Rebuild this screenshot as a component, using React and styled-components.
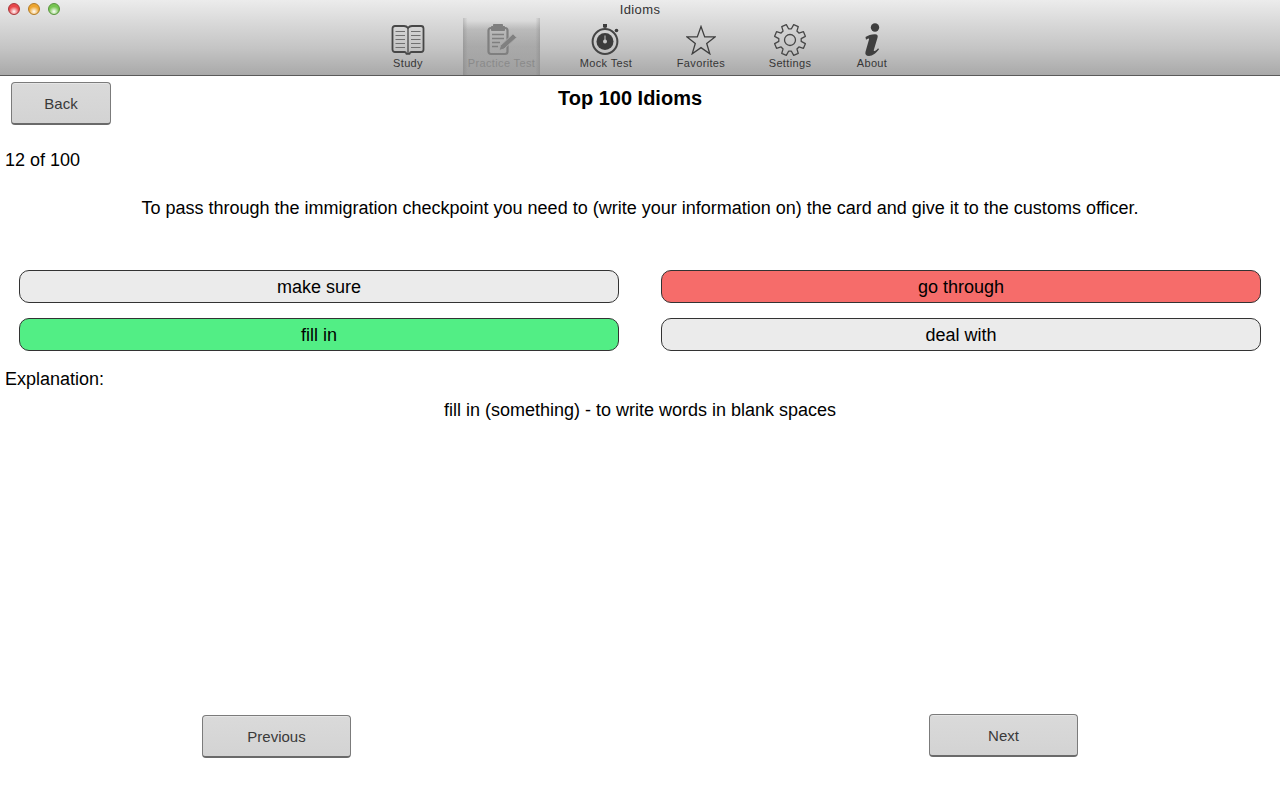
import styled, { createGlobalStyle } from "styled-components"

const GlobalStyle = createGlobalStyle`
  html, body { margin: 0; padding: 0; background: #fff; }
  body { font-family: "Liberation Sans", Arial, sans-serif; color: #000; }
`

const tools = [
  { label: "Study", width: 50, gap: 383, Icon: BookIcon },
  { label: "Practice Test", width: 77, gap: 30, Icon: ClipboardIcon, disabled: true },
  { label: "Mock Test", width: 60, gap: 36, Icon: WatchIcon },
  { label: "Favorites", width: 60, gap: 35, Icon: StarIcon },
  { label: "Settings", width: 60, gap: 29, Icon: GearIcon },
  { label: "About", width: 50, gap: 27, Icon: InfoIcon },
]

function BookIcon() {
  return (
    <svg width="34" height="32" viewBox="0 0 34 32" fill="none">
      <path d="M4 2h9c2 0 3 .6 4 2 1-1.400 2-2 4-2h9c1.500 0 2.500 1 2.500 2.500v21c0 1.500-1 2.500-2.500 2.500h-9.500c-1 0-1.500.500-2 1.800h-3c-.500-1.300-1-1.800-2-1.800H4c-1.500 0-2.500-1-2.500-2.500v-21C1.500 3 2.500 2 4 2z" stroke="#474747" strokeWidth="1.800" />
      <path d="M17 4v25" stroke="#474747" strokeWidth="1.300" />
      <path d="M4.500 7.500h9.500M4.500 11.500h9.500M4.500 15.500h9.500M4.500 19.500h9.500M4.500 23.500h9.500M20 7.500h9.500M20 11.500h9.500M20 15.500h9.500M20 19.500h9.500M20 23.500h9.500" stroke="#707070" strokeWidth="1.100" />
    </svg>
  )
}

function ClipboardIcon() {
  return (
    <svg width="32" height="33" viewBox="0 0 32 33" fill="none" stroke="#7f7f7f">
      <path d="M5 5h14c1.500 0 2.500 1 2.500 2.500v21c0 1.500-1 2.500-2.500 2.500H5c-1.500 0-2.500-1-2.500-2.500v-21C2.500 6 3.500 5 5 5z" strokeWidth="2.200" />
      <path d="M7.500 1.500h9v2h2v4h-13v-4h2z" fill="#7f7f7f" strokeWidth="1" />
      <path d="M6 11.500h12M6 15.500h12M6 19.500h8M6 23.500h6" strokeWidth="1.600" />
      <path d="M13 27.500l1.500-5L27 11l3.500 3.500L18 26z" fill="#808080" stroke="#a9a9a9" strokeWidth="1" />
    </svg>
  )
}

function WatchIcon() {
  return (
    <svg width="30" height="32" viewBox="0 0 30 32">
      <rect x="12" y="0" width="4" height="3.500" fill="#3c3c3c" />
      <path d="M14 2v3" stroke="#3c3c3c" strokeWidth="1.500" />
      <circle cx="25.500" cy="6.500" r="1.800" fill="#3c3c3c" />
      <circle cx="14" cy="17.500" r="12.400" fill="none" stroke="#454545" strokeWidth="2" />
      <circle cx="14" cy="17.500" r="8.500" fill="#3c3c3c" />
      <path d="M14 11.500v5" stroke="#c6c6c6" strokeWidth="1" />
      <circle cx="14" cy="17.500" r="2" fill="#c6c6c6" />
    </svg>
  )
}

function StarIcon() {
  return (
    <svg width="30" height="30" viewBox="0 0 30 30" fill="none" stroke="#3f3f3f" strokeWidth="1.300">
      <path d="M15 1.500l3.700 10.400h10.300l-8.300 6.500 3.100 10.400L15 22.600l-8.800 6.200 3.100-10.400L1 11.900h10.300z" />
    </svg>
  )
}

// gear outline with n blocky teeth
function gearPath(cx, cy, n, rOuter, rRoot) {
  const pts = []
  for (let i = 0; i < n; i++) {
    const a = (i * 2 * Math.PI) / n - Math.PI / 2 + Math.PI / 8
    const w = (2 * Math.PI) / n
    const at = (r, t) => `${(cx + r * Math.cos(t)).toFixed(2)} ${(cy + r * Math.sin(t)).toFixed(2)}`
    pts.push(at(rRoot, a - w * 0.34), at(rOuter, a - w * 0.2), at(rOuter, a + w * 0.2), at(rRoot, a + w * 0.34))
  }
  return `M${pts.join("L")}Z`
}

function GearIcon() {
  return (
    <svg width="34" height="34" viewBox="0 0 34 34" fill="none" stroke="#474747" strokeWidth="1.300">
      <path d={gearPath(17, 17, 8, 15.800, 11.300)} strokeLinejoin="round" />
      <circle cx="17" cy="17" r="5.500" />
    </svg>
  )
}

function InfoIcon() {
  return (
    <svg width="20" height="34" viewBox="0 0 20 34" fill="#3f3f3f">
      <circle cx="13" cy="4.500" r="4.200" />
      <path d="M3.500 14c2.500-1.500 5.500-2.800 9.500-2.800 2.500 0 3.200 1.200 2.500 3.600L11.800 27c-.300 1.200.600 1.300 1.500.800 1-.600 2-1.500 2.800-2.500l.900 1C14.500 30 10.500 33 7 33c-3 0-4.200-1.500-3.500-4.200L7 16.500c.200-.900-.500-1.100-1.200-.700l-1.800 1z" />
    </svg>
  )
}

function ToolItem({ label, width, gap, Icon, disabled }) {
  return (
    <Tool $width={width} $gap={gap} $disabled={disabled}>
      <IconSlot><Icon /></IconSlot>
      <ToolLabel $disabled={disabled}>{label}</ToolLabel>
    </Tool>
  )
}

export default function App() {
  return (
    <Page>
      <GlobalStyle />
      <TitleBar>
        <TitleRow>
          <Lights>
            <Light $color="#e8474a" $rim="#a83438" />
            <Light $color="#eda52f" $rim="#b37a22" />
            <Light $color="#76c550" $rim="#57933c" />
          </Lights>
          <WindowTitle>Idioms</WindowTitle>
        </TitleRow>
        <ToolRow>
          {tools.map((t) => <ToolItem key={t.label} {...t} />)}
        </ToolRow>
      </TitleBar>

      <Content>
        <HeaderRow>
          <GreyButton $width={100} $height={43}>Back</GreyButton>
          <Heading>Top 100 Idioms</Heading>
        </HeaderRow>
        <Counter>12 of 100</Counter>
        <Question>
          To pass through the immigration checkpoint you need to (write your information on) the card and give it to the customs officer.
        </Question>
        <Options>
          <Option>make sure</Option>
          <Option $state="wrong">go through</Option>
          <Option $state="right">fill in</Option>
          <Option>deal with</Option>
        </Options>
        <ExplainLabel>Explanation:</ExplainLabel>
        <ExplainText>fill in (something) - to write words in blank spaces</ExplainText>
        <Footer>
          <GreyButton $width={149} $height={43}>Previous</GreyButton>
          <GreyButton $width={149} $height={43} $lift>Next</GreyButton>
        </Footer>
      </Content>
    </Page>
  )
}

const Page = styled.div`
  width: 1280px;
  height: 800px;
  overflow: hidden;
  background: #fff;
`

const TitleBar = styled.header`
  height: 75px;
  box-sizing: content-box;
  border-bottom: 1px solid #5a5a5a;
  background: linear-gradient(#ececec 0%, #dcdcdc 25%, #c4c4c4 65%, #a9a9a9 100%);
`

const TitleRow = styled.div`
  position: relative;
  height: 18px;
  display: flex;
  justify-content: center;
  align-items: center;
`

const Lights = styled.div`
  position: absolute;
  left: 8px;
  top: 3px;
  display: flex;
  gap: 8px;
`

const Light = styled.span`
  width: 12px;
  height: 12px;
  border-radius: 50%;
  box-sizing: border-box;
  border: 1px solid ${(p) => p.$rim};
  background: radial-gradient(circle at 50% 75%, #fff 0%, ${(p) => p.$color} 55%);
`

const WindowTitle = styled.div`
  font-size: 13px;
  letter-spacing: 0.4px;
  color: #333;
  font-family: "Liberation Sans", sans-serif;
`

const ToolRow = styled.nav`
  display: flex;
  height: 57px;
`

const Tool = styled.div`
  width: ${(p) => p.$width}px;
  margin-left: ${(p) => p.$gap}px;
  padding-top: 5px;
  box-sizing: border-box;
  display: flex;
  flex-direction: column;
  align-items: center;
  justify-content: flex-start;
  ${(p) => p.$disabled && `
    background: linear-gradient(90deg, rgba(110,110,110,.28) 0%, rgba(110,110,110,0) 6%, rgba(110,110,110,0) 94%, rgba(110,110,110,.28) 100%),
      linear-gradient(rgba(130,130,130,0) 0%, rgba(130,130,130,0) 5%, rgba(130,130,130,.3) 20%, rgba(130,130,130,.42) 50%, rgba(130,130,130,.3) 100%);
  `}
`

const IconSlot = styled.div`
  height: 33px;
  display: flex;
  align-items: center;
  justify-content: center;
`

const ToolLabel = styled.div`
  margin-top: 0;
  font-size: 11px;
  line-height: 14px;
  white-space: nowrap;
  letter-spacing: 0.35px;
  color: ${(p) => (p.$disabled ? "#8a8a8a" : "#363636")};
`

const Content = styled.main`
  display: flex;
  flex-direction: column;
  align-items: stretch;
`

const HeaderRow = styled.div`
  position: relative;
  height: 43px;
  margin-top: 6px;
  padding-left: 11px;
`

const GreyButton = styled.button`
  display: block;
  width: ${(p) => p.$width}px;
  height: ${(p) => p.$height}px;
  box-sizing: border-box;
  padding: 0;
  border: 1px solid #7b7b7b;
  border-bottom: 2px solid #6a6a6a;
  border-radius: 4px;
  background: linear-gradient(#dadada, #d3d3d3);
  box-shadow: inset 0 1px 0 #e6e6e6;
  font-family: "Liberation Sans", sans-serif;
  font-size: 15px;
  color: #3a3a3a;
  ${(p) => p.$lift && "margin-top: -1px;"}
`

const Heading = styled.h1`
  position: absolute;
  top: 4px;
  left: 0;
  width: 1260px;
  margin: 0;
  text-align: center;
  font-size: 20px;
  line-height: 24px;
  font-weight: bold;
`

const Counter = styled.div`
  margin-top: 25px;
  padding-left: 5px;
  font-size: 18px;
  line-height: 20px;
`

const Question = styled.p`
  margin: 28px 0 0;
  text-align: center;
  font-size: 18px;
  line-height: 20px;
`

const Options = styled.div`
  margin-top: 52px;
  padding: 0 19px;
  display: grid;
  grid-template-columns: 600px 600px;
  column-gap: 42px;
  row-gap: 15px;
`

const stateColors = { wrong: "#f66c6a", right: "#52ee85" }

const Option = styled.div`
  height: 33px;
  box-sizing: border-box;
  padding-top: 1px;
  border: 1px solid #333;
  border-radius: 10px;
  background: ${(p) => stateColors[p.$state] || "#ebebeb"};
  display: flex;
  align-items: center;
  justify-content: center;
  font-size: 18px;
`

const ExplainLabel = styled.div`
  margin-top: 18px;
  padding-left: 5px;
  font-size: 18px;
  line-height: 20px;
`

const ExplainText = styled.div`
  margin-top: 11px;
  text-align: center;
  font-size: 18px;
  line-height: 20px;
`

const Footer = styled.div`
  margin-top: 295px;
  padding: 0 202px;
  display: flex;
  justify-content: space-between;
`
